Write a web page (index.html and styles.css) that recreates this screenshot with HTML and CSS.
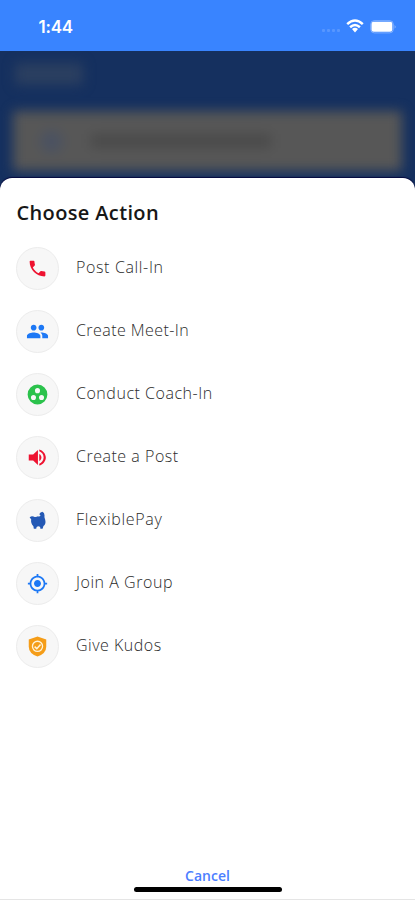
FILE: index.html
```html
<!DOCTYPE html>
<html lang="en">
<head>
<meta charset="utf-8">
<meta name="viewport" content="width=device-width, initial-scale=1">
<title>Choose Action</title>
<link rel="stylesheet" href="styles.css">
</head>
<body>
<div class="screen">
  <header class="status">
    <span class="time">1:44</span>
    <div class="indicators">
      <span class="signal"><i></i><i></i><i></i><i></i></span>
      <svg class="wifi" viewBox="0 0 18 14"><g fill="none" stroke="#fff" stroke-width="2.5"><path d="M1.2 5.100Q9-2 16.800 5.100"/><path d="M4.100 8.200Q9 3.800 13.900 8.200"/></g><path fill="#fff" d="M6 10.100Q9 7.500 12 10.100L9 13.400Z"/></svg>
      <svg class="battery" viewBox="0 0 27 14"><rect x=".7" y=".7" width="22.600" height="12.200" rx="3.600" fill="none" stroke="#fff" stroke-opacity=".35"/><rect x="1.500" y="1.800" width="20.800" height="10" rx="2.200" fill="#fff"/><path d="M24.700 4.800Q26.500 6.800 24.700 8.800Z" fill="#fff" fill-opacity=".5"/></svg>
    </div>
  </header>
  <div class="backdrop">
    <div class="blurred">
      <div class="page-title"></div>
      <div class="search"><span class="dot"></span><span class="line"></span></div>
    </div>
  </div>
  <main class="sheet">
    <h1>Choose Action</h1>
    <ul class="actions">
      <li><span class="icon"><svg viewBox="0 0 24 24" fill="#ee1230"><path d="M6.620 10.790c1.440 2.830 3.760 5.140 6.590 6.590l2.200-2.200c.27-.27.67-.36 1.020-.24 1.120.37 2.330.57 3.570.57.55 0 1 .45 1 1V20c0 .55-.45 1-1 1-9.390 0-17-7.610-17-17 0-.55.45-1 1-1h3.500c.55 0 1 .45 1 1 0 1.250.2 2.450.57 3.570.11.35.03.74-.25 1.020l-2.200 2.200z"/></svg></span><span class="label call">Post Call-In</span></li>
      <li><span class="icon"><svg class="people" viewBox="0 0 24 24" fill="#1d78f5"><path d="M16 11c1.660 0 2.990-1.340 2.990-3S17.660 5 16 5c-1.660 0-3 1.340-3 3s1.340 3 3 3zm-8 0c1.660 0 2.990-1.340 2.990-3S9.660 5 8 5C6.340 5 5 6.340 5 8s1.340 3 3 3zm0 2c-2.330 0-7 1.170-7 3.500V19h14v-2.500c0-2.330-4.670-3.500-7-3.500zm8 0c-.29 0-.62.020-.97.050 1.160.84 1.970 1.970 1.970 3.450V19h6v-2.500c0-2.330-4.670-3.500-7-3.500z"/></svg></span><span class="label meet">Create Meet-In</span></li>
      <li><span class="icon"><svg viewBox="0 0 24 24" fill="#2bc24c"><path fill-rule="evenodd" d="M12 .7A11.300 11.300 0 1 0 12 23.300A11.300 11.300 0 1 0 12 .7ZM12 4.700a2.900 2.900 0 1 1 0 5.800a2.900 2.900 0 1 1 0-5.800ZM7.400 12.500a2.900 2.900 0 1 1 0 5.800a2.900 2.900 0 1 1 0-5.800ZM16.600 12.500a2.900 2.900 0 1 1 0 5.800a2.900 2.900 0 1 1 0-5.800Z"/></svg></span><span class="label coach">Conduct Coach-In</span></li>
      <li><span class="icon"><svg viewBox="0 0 24 24" fill="#ee1230"><path d="M2 8.500v7h5l5.500 5V3.500L7 8.500H2zm14.500 3.500c0-1.770-1.020-3.290-2.500-4.030v8.050c1.480-.73 2.500-2.250 2.500-4.020zM14 2.730v2.260c2.890.86 5 3.840 5 7.010s-2.110 6.150-5 7.010v2.260c4.010-.91 7.500-4.990 7.500-9.270s-3.490-8.360-7.500-9.270z"/></svg></span><span class="label post">Create a Post</span></li>
      <li><span class="icon"><svg viewBox="0 0 24 24" fill="#2459b5"><path d="M3 8.500Q5 6.500 7.500 7.500Q10 8.800 12.500 7.200Q14.500 8 15.500 6L14 4.800Q14.500 3 17.500 2Q20 3 20 6Q19.500 8 20.800 11Q22 16 18.800 18.300L17.800 21.500H15.300L15 19.300Q13 18 11 19.300L10.500 21.500H7.800L7.300 18.500Q4 15 4.800 10.500Z"/></svg></span><span class="label pay">FlexiblePay</span></li>
      <li><span class="icon"><svg viewBox="0 0 24 24" fill="#1d78f5"><path d="M12 8c-2.210 0-4 1.790-4 4s1.790 4 4 4 4-1.790 4-4-1.790-4-4-4zm8.940 3c-.46-4.170-3.770-7.480-7.940-7.940V1h-2v2.060C6.830 3.520 3.520 6.830 3.060 11H1v2h2.060c.46 4.170 3.770 7.480 7.940 7.940V23h2v-2.060c4.170-.46 7.480-3.770 7.940-7.940H23v-2h-2.060zM12 19c-3.870 0-7-3.130-7-7s3.130-7 7-7 7 3.130 7 7-3.130 7-7 7z"/></svg></span><span class="label group">Join A Group</span></li>
      <li><span class="icon"><svg viewBox="0 0 24 24"><path fill="#f59d18" d="M12 .7L22 4V12Q22 20 12 23.500Q2 20 2 12V4Z"/><circle cx="12" cy="11.800" r="5.800" fill="none" stroke="#fff3d9" stroke-width="1.500"/><path d="M8.700 12.200L11.200 14.500L15.500 9.800" fill="none" stroke="#fff3d9" stroke-width="1.800"/></svg></span><span class="label kudos">Give Kudos</span></li>
    </ul>
    <footer><button class="cancel">Cancel</button><div class="home"></div></footer>
  </main>
</div>
</body>
</html>
```
FILE: styles.css
```css
* { box-sizing: border-box; }
body { margin: 0; background: #fff; font-family: "Open Sans", "Noto Sans", sans-serif; }
.screen { width: 415px; height: 900px; display: flex; flex-direction: column; overflow: hidden; }
.status { height: 51px; flex: none; background: #3984ff; display: flex; justify-content: space-between; align-items: flex-start; padding: 17px 18px 0 38.500px; color: #fff; }
.time { font: 600 17px/20px Inter, sans-serif; letter-spacing: -.2px; }
.indicators { display: flex; align-items: flex-start; padding-top: 2px; }
.signal { display: flex; gap: 2px; margin: 10px 6px 0 0; }
.signal i { width: 3px; height: 3px; border-radius: 1px; background: #5796ff; }
.wifi { width: 18px; height: 14px; margin-right: 6px; }
.battery { width: 27px; height: 14px; margin-top: 1px; }
.backdrop { height: 141px; flex: none; background: #15305f; overflow: hidden; }
.blurred { padding: 12px 13px 0; filter: blur(6px); }
.page-title { width: 68px; height: 22px; background: #2b3f60; margin-left: 2px; }
.search { height: 60px; margin-top: 26px; background: #575757; display: flex; align-items: center; gap: 28px; padding-left: 27px; }
.dot { width: 23px; height: 23px; border-radius: 50%; background: #4b5261; }
.line { width: 180px; height: 14px; background: #4a4a4a; }
.sheet { height: 722px; margin-top: -14px; background: #fff; border-radius: 12px 12px 0 0; display: flex; flex-direction: column; flex: none; box-shadow: 0 -1px 1px #05083f; position: relative; border-bottom: 1px solid #e5e5e5; }
h1 { margin: 23px 0 0 16.500px; font-size: 20px; line-height: 24px; font-weight: 600; color: #171717; letter-spacing: .36px; }
.actions { list-style: none; margin: 22px 0 0; padding: 0 16px; display: flex; flex-direction: column; gap: 20px; }
.actions li { height: 43px; display: flex; align-items: center; gap: 17px; }
.icon { width: 43px; height: 43px; flex: none; border-radius: 50%; background: #f7f7f7; border: 1px solid #ececec; display: grid; place-items: center; }
.icon svg { width: 21px; height: 21px; display: block; }
.icon .people { width: 23px; height: 23px; }
.label { font-size: 16px; line-height: 22px; font-weight: 350; color: #2b2b2b; margin-top: -3px; white-space: nowrap; }
.call { letter-spacing: .64px; }
.meet { letter-spacing: .43px; }
.coach { letter-spacing: .53px; }
.post { letter-spacing: .52px; }
.pay { letter-spacing: .66px; }
.group { letter-spacing: .54px; }
.kudos { letter-spacing: .5px; }
footer { margin-top: auto; display: flex; flex-direction: column; align-items: center; padding-bottom: 7px; }
.cancel { border: 0; padding: 0; background: none; font: 600 14px/20px "Open Sans", sans-serif; color: #4c7eff; }
.home { width: 148px; height: 5px; margin-top: 1px; border-radius: 3px; background: #000; }
```
